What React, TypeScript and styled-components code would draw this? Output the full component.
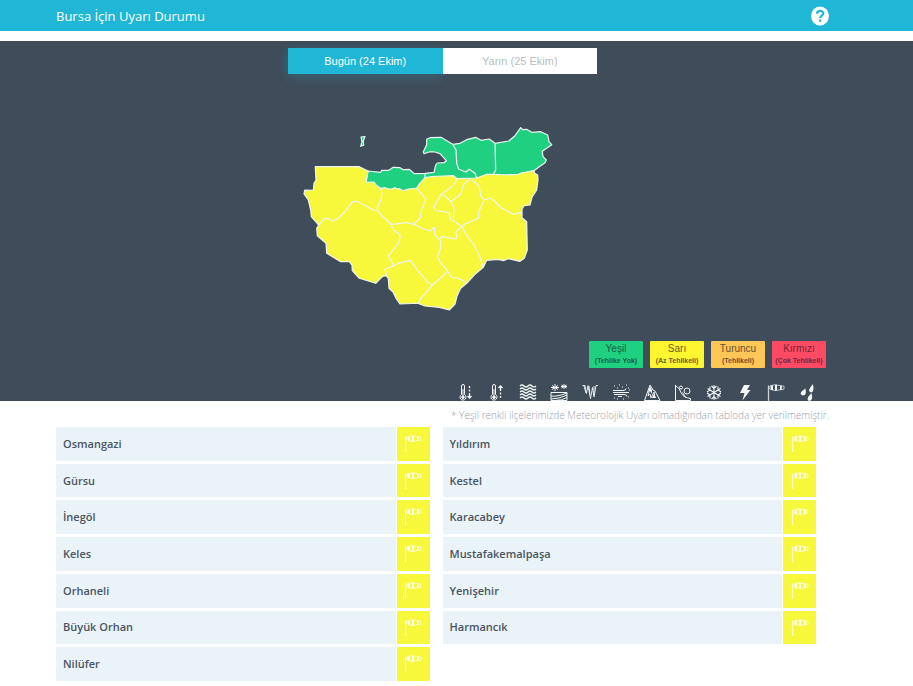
import React, { useState } from "react";
import styled, { createGlobalStyle } from "styled-components";

const GlobalStyle = createGlobalStyle`
  * { box-sizing: border-box; }
  body { margin: 0; background: #fff; font-family: "Open Sans", sans-serif; color: #4a5563; }
  button { font: inherit; border: 0; padding: 0; cursor: pointer; }
`;

const sidePadding = "padding-left: 56px; padding-right: 84px;";

const Header = styled.header`
  ${sidePadding}
  display: flex;
  align-items: center;
  justify-content: space-between;
  height: 31px;
  background: #20b6d6;
  color: #fff;
`;

const Title = styled.h1`
  margin: 0;
  font-size: 13px;
  line-height: 18px;
  font-weight: 400;
`;

const HelpButton = styled.button`
  display: flex;
  width: 18px;
  height: 20px;
  background: none;
`;

const MapPanel = styled.section`
  ${sidePadding}
  display: flex;
  flex-direction: column;
  margin-top: 10px;
  padding-top: 7px;
  background: #3f4c59;
`;

const Tabs = styled.div`
  display: flex;
  align-self: center;
  width: 40%;
  min-width: 240px;
`;

const Tab = styled.button<{ $active: boolean }>`
  flex: 1;
  height: 26px;
  font-family: "Liberation Sans", Arial, sans-serif;
  font-size: 11px;
  background: ${(p) => (p.$active ? "#20b6d6" : "#fff")};
  color: ${(p) => (p.$active ? "#fff" : "#b4c0c3")};
  box-shadow: ${(p) => (p.$active ? "0 3px 12px rgba(32, 182, 214, 0.25)" : "none")};
`;

const DistrictMap = styled.svg`
  align-self: center;
  width: 279px;
  height: 196px;
  margin: 46px 0 25px;
`;

const Legend = styled.ul`
  display: flex;
  justify-content: flex-end;
  gap: 7px;
  margin: 0 3px 0 0;
  padding: 0;
  list-style: none;
`;

const Level = styled.li<{ $color: string; $ink: string }>`
  display: flex;
  flex-direction: column;
  align-items: center;
  width: 54px;
  height: 27px;
  padding-top: 2px;
  border-radius: 1px;
  background: ${(p) => p.$color};
  color: ${(p) => p.$ink};
  font-family: "Liberation Sans", Arial, sans-serif;
  font-size: 10px;
  line-height: 12px;
  white-space: nowrap;
`;

const LevelNote = styled.span`
  font-size: 7px;
  font-weight: 700;
`;

const Hazards = styled.ul`
  display: flex;
  justify-content: flex-end;
  gap: 11px;
  margin: 16px 12px 0 0;
  padding: 0;
  list-style: none;
  height: 17px;
  color: #f3f5f6;
`;

const HazardIcon = styled.svg`
  display: block;
  width: 20px;
  height: 17px;
  fill: none;
  stroke: currentColor;
  stroke-width: 1;
`;

const Content = styled.main`
  ${sidePadding}
`;

const Note = styled.p`
  margin: 0;
  padding: 7px 0 5px;
  font-size: 10px;
  font-weight: 300;
  line-height: 14px;
  text-align: right;
  color: #99a2ad;
`;

const Districts = styled.ul`
  display: grid;
  grid-template-columns: 1fr 1fr;
  grid-auto-rows: 1fr;
  gap: 3px 13px;
  min-height: 254px;
  margin: 0 13px 0 0;
  padding: 0;
  list-style: none;
`;

const District = styled.li`
  display: flex;
  gap: 1px;
`;

const DistrictName = styled.span`
  flex: 1;
  display: flex;
  align-items: center;
  padding-left: 7px;
  background: #eaf3f7;
  font-size: 11px;
  line-height: 16px;
  font-weight: 600;
`;

const Warning = styled.span`
  display: flex;
  justify-content: center;
  width: 33px;
  padding-top: 8px;
  background: #f7f73b;
  color: #fffff0;
`;

const levels = [
  { name: "Yeşil", note: "(Tehlike Yok)", color: "#20d081", ink: "#176043" },
  { name: "Sarı", note: "(Az Tehlikeli)", color: "#fff530", ink: "#66621f" },
  { name: "Turuncu", note: "(Tehlikeli)", color: "#ffc658", ink: "#69522c" },
  { name: "Kırmızı", note: "(Çok Tehlikeli)", color: "#ff4a64", ink: "#74253a" },
];

const windsock = (
  <>
    <path d="M2.500 1.500V17" strokeWidth="1.300" opacity=".8" />
    <path d="M2.500 3.500 5 1.500M2.500 3.500 5 5.500M5 1.500 9 .800l9 1.400v3L9 6.600 5 5.500z" strokeWidth=".7" />
    <path d="M5 1.500h2v4.500H5zM9 .800h2v5.700H9zM14 1.700h1.800v4H14z" fill="currentColor" stroke="none" />
  </>
);

const hazards: { label: string; art: React.ReactNode }[] = [
  {
    label: "Soğuk",
    art: (
      <>
        <path d="M5.500 10.500V2a1.500 1.500 0 0 1 3 0v8.500a3 3 0 1 1-3 0z" />
        <circle cx="7" cy="13.200" r="1.300" fill="currentColor" />
        <path d="M7 5v8" />
        <path d="M13.500 2v2M13.500 5.500v2M13.500 9v5M11.500 12l2 2 2-2" strokeWidth="1.300" />
      </>
    ),
  },
  {
    label: "Sıcak",
    art: (
      <>
        <path d="M5.500 10.500V2a1.500 1.500 0 0 1 3 0v8.500a3 3 0 1 1-3 0z" />
        <circle cx="7" cy="13.200" r="1.300" fill="currentColor" />
        <path d="M7 5v8" />
        <path d="M13.500 14v-2M13.500 10.500v-2M13.500 7V2M11.500 4l2-2 2 2" strokeWidth="1.300" />
      </>
    ),
  },
  {
    label: "Sel",
    art: [2, 5, 8, 11, 14].map((y) => (
      <path key={y} d={`M2 ${y}q2-2 4 0t4 0 4 0 4 0`} strokeWidth="1.200" />
    )),
  },
  {
    label: "Don",
    art: (
      <>
        <path d="M6 0v7M3 1.500l6 4M9 1.500l-6 4M15 0v5M12.500 1l5 3M17.500 1l-5 3M2 3.500h8M12 2.500h6" />
        <path d="M2 8.500h16v8H2zM2 12q6 1 16-3M2 15q8 0 16-4M6 16.500q7 0 12-3" />
      </>
    ),
  },
  {
    label: "Buzlanma",
    art: <path d="M2.500 1.500H5l1.500 8L8 1.500l2.500 13 2-11 1.500 9.500L16 1.500h2M4 2l2 7M9 2l1 9M14 2v9" strokeWidth=".9" />,
  },
  {
    label: "Toz taşınımı",
    art: (
      <>
        <path d="M2 6.500h10q3 0 3-2M2 8.500h16M3 10.500h10q3 0 3 2M7 12.500h4" />
        <path d="M3 2h1M6 4h1M8 1h1M11 3h1M15 1h1M17 4h1M3 14h1M6 15h1M12 15h1M17 13h1M18 6h1" />
      </>
    ),
  },
  {
    label: "Çığ",
    art: (
      <>
        <path d="M2.500 16.500 8 1l3 5 2 1 5 9.500zM8 4l-2 8 2-2 1 4 3-6 1 6" />
        <path d="M8 2 6 8l2-1 2 3V6zM12 10l-2 4h4z" fill="currentColor" stroke="none" />
      </>
    ),
  },
  {
    label: "Heyelan",
    art: (
      <>
        <path d="M2.500 1v15.500h15v-2q-7-1-9-5-2-6-6-8" />
        <circle cx="8" cy="3.500" r="1.500" />
        <circle cx="14" cy="7" r="3" />
        <path d="M9.500 8.500l3 5" />
      </>
    ),
  },
  {
    label: "Kar",
    art: (
      <path d="M10 1v15M3.500 4.500l13 8M16.500 4.500l-13 8M7.500 2l2.500 2.500L12.500 2M7.500 15l2.500-2.500 2.500 2.500M3 8l3-2V2.500M17 9l-3 2v3.500M3 9l3 2v3.500M17 8l-3-2V2.500" strokeWidth="1.100" />
    ),
  },
  {
    label: "Gök gürültülü sağanak",
    art: <path d="M9 1h6l-3 5h3.500L7.500 16.500 9.500 9H5z" fill="currentColor" stroke="none" />,
  },
  { label: "Rüzgar", art: windsock },
  {
    label: "Yağmur",
    art: (
      <path
        d="M16 0q1.500 8.500-2 8.500-4.500-1.500 2-8.500zM8.500 4.500q1.500 7.500-3 7-5-2 3-7zM14.500 9q2 8-2.500 8-4-1.500 2.500-8z"
        fill="currentColor"
        stroke="none"
      />
    ),
  },
];

const districts = [
  "Osmangazi", "Yıldırım",
  "Gürsu", "Kestel",
  "İnegöl", "Karacabey",
  "Keles", "Mustafakemalpaşa",
  "Orhaneli", "Yenişehir",
  "Büyük Orhan", "Harmancık",
  "Nilüfer",
];

const safeArea =
  "M368 171 380.700 172.300 381.700 170.300 388.700 170.300 393.300 167.300 400 167.700 403.300 169.700 409.300 169.300 414.300 173.700 425 173.300 434 172.300 435.700 165 437.300 163 444 162.700 446.300 160.700 440 153.700 435 152 430 151.700 424 153.700 423.300 151.700 426.700 144.700 426.700 139.300 430 137.700 441 137.300 452.700 144.300 460 143.300 466.700 139.700 475.700 137.300 481 140.300 489.300 139 495 143.300 508.700 141 515 135.700 520.700 127.700 522.700 129.700 526.700 129.300 531.700 132.300 540.700 131.700 547.700 135 549 141.700 551.700 144.700 542.300 151.300 543 156.700 546.300 160 545 162.700 540 166.300 534 170.700 518 175 493 175 477 179 457 180 425 179 417 189 403 191 381 189 366 182.300Z";

const warnedArea =
  "M315.300 166.700 359.300 166.700 368 171 366 182.300 374 182 376 185 380.700 188.300 385 187.700 390 189.300 395 187.700 397 189 399 188.500 403.300 190.700 407.300 189.300 416.700 188 419.300 184 425 177.700 432 176.500 453.300 175.700 457.300 178.700 476.700 178 486.700 174.300 493.300 174.300 507 175 518.300 174.300 521 173 534 170.700 534.500 173 537.700 175 538 180 536.700 190 532 197.300 530 205 524 205.700 522 209.300 522 217.700 526.700 221.700 527.300 250 524.300 258.300 520 261.300 508.300 258.700 503.300 260.700 498.300 259.300 486.700 260.300 483.300 267.300 475 274.300 466.700 283.300 460.700 288.300 457 296 455 304 449.300 310 439.300 307.300 425 306 418.300 303.500 412 303.500 400 304 396 298.300 393 292 389 288.300 388.300 278.300 386 275.700 382.700 276.300 375.700 283.300 359.300 278.300 352.300 270.700 352 265 349.300 261.700 340.700 261.700 326.700 253.300 326 243.300 317.300 235.700 316.700 228.300 318.700 225 311.300 216.700 310.700 210 308.300 200 304 194 304.700 190 313.300 190.300 314 183.300 316 180Z";

const borders = [
  "M452.700 144.300 456 150 456.700 163.300 458.700 169.300 466 172 469.300 169.300 475 173.300 476.700 178",
  "M495 143.300 495.700 170 493.300 174.300",
  "M425 173.300V178",
  "M318.700 225 324.300 218.300 328.300 218.700 332.700 220.700 337.300 219 345 211.700 352.700 201.700 356.700 201.300 364 205 373.300 210 377.300 210",
  "M380.700 188.300 382 193.300 381 200 377.700 206.700 377.300 210 383 217 390 223.300 395 231.700 398.300 232.700 400.300 236.700 398.300 243.300 388.300 256 392.700 263.300 392 266.700 384.700 269 386.700 275",
  "M390 223.300 392 224.300 406.700 222.700 414 224.300 421.700 228.300 430 231 434.300 227.300 435 235 439.300 239.300",
  "M416.700 188 426 199.300 421.700 209.300 420 218.300 413.300 224.300",
  "M392 266.700 398.300 263.300 410 260.300 414 265 418.300 271.700 423.300 276.700 427 282 432.300 285 425 294 421 298 418.300 303.500",
  "M432.300 285 441.700 277.300 447.700 271",
  "M439.300 239.300 440.700 241.700 440.700 248.300 437.300 256.700 440 261.700 447.700 271 451 277 460 279 466.700 282.700",
  "M439.300 239.300 442.300 236.700 454.300 239 457 238.300 455.700 231.700 462.300 226.700 466 234.300 473.300 244 480 256.700 481.700 263.300 483.300 267",
  "M462.300 226.700 465 224 478.300 218.300 478.700 211.700 484.300 200 480.700 196 479.300 186 471.700 180",
  "M484.300 200 490 198 494 200.700 501.700 208.300 513.300 214.300 522 212.300",
  "M457.300 178.700 452.700 186 440.700 194.700 434 206.700 436 210.500 449.300 212.700 450 218.300 455 222 462.300 226.700",
  "M440.700 194.700 445 196 451 201.700 454 208.300 453.300 218.300",
  "M451 201.700 460.700 194 463.300 185 469.300 179.300",
];

export default function App() {
  const [day, setDay] = useState(0);
  return (
    <>
      <GlobalStyle />
      <Header>
        <Title>Bursa İçin Uyarı Durumu</Title>
        <HelpButton aria-label="Yardım">
          <svg width="18" height="20" viewBox="0 0 18 20">
            <ellipse cx="9" cy="10" rx="9" ry="9.500" fill="#fff" />
            <path d="M6 7.800C6 4 12.300 4 12.300 7.500c0 2.300-3.100 2-3.100 4.500M9.200 13.500v2.200" fill="none" stroke="#20b6d6" strokeWidth="2.200" />
          </svg>
        </HelpButton>
      </Header>
      <MapPanel>
        <Tabs>
          {["Bugün (24 Ekim)", "Yarın (25 Ekim)"].map((label, i) => (
            <Tab key={label} $active={day === i} aria-pressed={day === i} onClick={() => setDay(i)}>
              {label}
            </Tab>
          ))}
        </Tabs>
        <DistrictMap viewBox="303 120 279 196" role="img" aria-label="Bursa ilçeleri">
          <g stroke="#eef5f2" strokeWidth="1.200" strokeLinejoin="round">
            <path d="M361 137 365 136.500 363.300 140.700 363.700 145.300 360.700 146.300 362 141.500Z" fill="#20d081" />
            <path d={safeArea} fill="#20d081" />
            <path d={warnedArea} fill="#f7f73b" />
            {borders.map((d) => (
              <path key={d} d={d} fill="none" />
            ))}
          </g>
        </DistrictMap>
        <Legend>
          {levels.map((l) => (
            <Level key={l.name} $color={l.color} $ink={l.ink}>
              {l.name}
              <LevelNote>{l.note}</LevelNote>
            </Level>
          ))}
        </Legend>
        <Hazards>
          {hazards.map((h) => (
            <li key={h.label}>
              <HazardIcon viewBox="0 0 20 17" role="img" aria-label={h.label}>{h.art}</HazardIcon>
            </li>
          ))}
        </Hazards>
      </MapPanel>
      <Content>
        <Note>* Yeşil renkli ilçelerimizde Meteorolojik Uyarı olmadığından tabloda yer verilmemiştir.</Note>
        <Districts>
          {districts.map((name) => (
            <District key={name}>
              <DistrictName>{name}</DistrictName>
              <Warning>
                <HazardIcon viewBox="0 0 20 17" role="img" aria-label="Rüzgar">{windsock}</HazardIcon>
              </Warning>
            </District>
          ))}
        </Districts>
      </Content>
    </>
  );
}
